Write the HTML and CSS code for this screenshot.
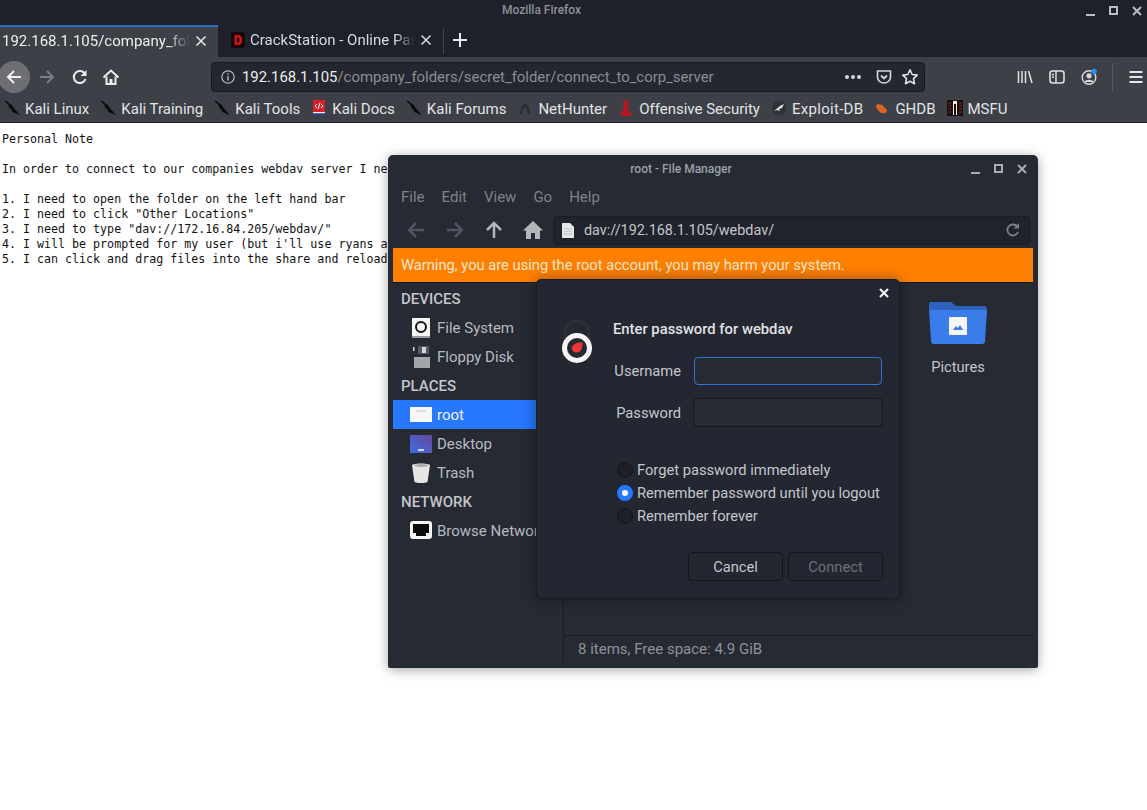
FILE: index.html
```html
<!DOCTYPE html>
<html>
<head>
    <title>Mozilla Firefox</title>
    <link rel="stylesheet" href="styles.css">
</head>
<body>
    <svg class="defs" width="0" height="0">
        <symbol id="kali" viewBox="0 0 16 16">
            <path d="M0 0.5 L2.5 1 L6 4 L8 5 L9.5 8 L12 10.5 L16 15 L12 13.5 L8.5 12 L7 9 L5 7.5 L4.5 5 Z" fill="#0b0b0d"/>
        </symbol>
    </svg>

    <div class="browser">
        <div class="titlebar">
            <span class="title">Mozilla Firefox</span>
            <div class="wm-buttons">
                <svg width="12" height="12" viewBox="0 0 12 12"><path d="M1 10h9" stroke="#b9bcc2" stroke-width="2"/></svg>
                <svg width="12" height="12" viewBox="0 0 12 12"><rect x="2" y="2" width="7" height="7" fill="none" stroke="#b9bcc2" stroke-width="2"/></svg>
                <svg width="12" height="12" viewBox="0 0 12 12"><path d="M2 2l8 8M10 2l-8 8" stroke="#b9bcc2" stroke-width="2"/></svg>
            </div>
        </div>

        <div class="tabstrip">
            <div class="tab active">
                <span class="tab-label">192.168.1.105/company_folders</span>
                <svg class="tab-close" width="12" height="12" viewBox="0 0 12 12"><path d="M1.5 1.5l9 9M10.5 1.5l-9 9" stroke="#e4e5e7" stroke-width="1.6"/></svg>
            </div>
            <div class="tab second">
                <svg class="favicon" width="16" height="16" viewBox="0 0 16 16"><rect x="1" y="0" width="14" height="16" rx="3" fill="#17070a"/><path d="M4.5 3h3.5c3 0 4 2 4 5s-1 5-4 5H4.5z" fill="#d3111b"/><path d="M7 5.5h1c1.2 0 1.5 1 1.5 2.5S9.2 10.5 8 10.5H7z" fill="#17070a"/></svg>
                <span class="tab-label">CrackStation - Online Password</span>
                <svg class="tab-close" width="12" height="12" viewBox="0 0 12 12"><path d="M1.5 1.5l9 9M10.5 1.5l-9 9" stroke="#d6d7da" stroke-width="1.6"/></svg>
            </div>
            <div class="tab-sep"></div>
            <svg class="new-tab" width="16" height="16" viewBox="0 0 16 16"><path d="M8 1v14M1 8h14" stroke="#e8e9eb" stroke-width="2"/></svg>
        </div>

        <div class="navbar">
            <div class="back">
                <svg width="18" height="18" viewBox="0 0 18 18"><path d="M16 9H3M9 3L3 9l6 6" fill="none" stroke="#f2f2f3" stroke-width="2"/></svg>
            </div>
            <svg class="nav-forward" width="18" height="18" viewBox="0 0 18 18"><path d="M2 9h13M9 3l6 6-6 6" fill="none" stroke="#7d7f85" stroke-width="1.8"/></svg>
            <svg class="nav-reload" width="18" height="18" viewBox="0 0 18 18"><path d="M14.5 11a6 6 0 1 1-.5-5" fill="none" stroke="#eceded" stroke-width="2"/><path d="M15.5 2v6h-6z" fill="#eceded"/></svg>
            <svg class="nav-home" width="18" height="18" viewBox="0 0 18 18"><path d="M1.5 9.5L9 2.5l7.5 7" fill="none" stroke="#eceded" stroke-width="2"/><path d="M4.5 8.5V16h9V8.5" fill="none" stroke="#eceded" stroke-width="2"/><rect x="7.5" y="11" width="3" height="5" fill="#eceded"/></svg>
            <div class="urlbar">
                <svg width="16" height="16" viewBox="0 0 16 16"><circle cx="8" cy="8" r="6.2" fill="none" stroke="#b4b6ba" stroke-width="1.2"/><path d="M8 7v4.5M8 4.3v1.4" stroke="#b4b6ba" stroke-width="1.4"/></svg>
                <span class="url"><b>192.168.1.105</b>/company_folders/secret_folder/connect_to_corp_server</span>
                <div class="url-dots"><i></i><i></i><i></i></div>
                <svg width="18" height="18" viewBox="0 0 18 18"><path d="M2.5 3h13v6a6.5 6 0 0 1-13 0z" fill="none" stroke="#d6d7d9" stroke-width="1.6" stroke-linejoin="round"/><path d="M6 7.5l3 3 3-3" fill="none" stroke="#d6d7d9" stroke-width="1.8"/></svg>
                <svg width="18" height="18" viewBox="0 0 18 18"><path d="M9 1.8l2.2 4.7 5 .6-3.7 3.5 1 5.1L9 13.2l-4.500 2.500 1-5.100L1.800 7.100l5-.6z" fill="none" stroke="#e2e3e5" stroke-width="1.6" stroke-linejoin="round"/></svg>
            </div>
            <div class="nav-tools">
                <svg width="18" height="18" viewBox="0 0 18 18"><path d="M2.5 3v12M6 3v12M9.5 3v12M12.5 3l3.5 12" stroke="#e0e1e3" stroke-width="1.5" fill="none"/></svg>
                <svg width="18" height="18" viewBox="0 0 18 18"><rect x="2" y="3" width="14" height="12" rx="2.5" fill="none" stroke="#e0e1e3" stroke-width="1.6"/><path d="M8 3v12M4 6.5h2M4 9h2" stroke="#e0e1e3" stroke-width="1.4"/></svg>
                <svg width="18" height="18" viewBox="0 0 18 18"><circle cx="9" cy="9.5" r="6.8" fill="none" stroke="#d8d9db" stroke-width="1.4"/><circle cx="9" cy="7.8" r="2.6" fill="#d8d9db"/><path d="M4.5 14c1-3 8-3 9 0z" fill="#d8d9db"/><circle cx="14" cy="3.5" r="2.8" fill="#2d8cf0"/></svg>
                <div class="tool-sep"></div>
                <svg width="18" height="18" viewBox="0 0 18 18"><path d="M2.5 4h13M2.5 9h13M2.5 14h13" stroke="#e6e7e9" stroke-width="2"/></svg>
            </div>
        </div>

        <div class="bookmarks">
            <div class="bookmark"><svg width="16" height="16"><use href="#kali"/></svg>Kali Linux</div>
            <div class="bookmark"><svg width="16" height="16"><use href="#kali"/></svg>Kali Training</div>
            <div class="bookmark"><svg width="16" height="16"><use href="#kali"/></svg>Kali Tools</div>
            <div class="bookmark"><svg width="16" height="16" viewBox="0 0 16 16"><rect x="2" y="0" width="12" height="12" fill="#d8202a"/><path d="M6 4L4 6l2 2M10 4l2 2-2 2M7 9l2-6" fill="none" stroke="#fff" stroke-width="1"/><rect x="2" y="12" width="12" height="1.5" fill="#eceded"/><rect x="2" y="13.5" width="12" height="2" fill="#2b3f8c"/></svg>Kali Docs</div>
            <div class="bookmark"><svg width="16" height="16"><use href="#kali"/></svg>Kali Forums</div>
            <div class="bookmark"><svg width="16" height="16" viewBox="0 0 16 16"><path d="M3 14C3.5 9 5 4 8 4s4.5 5 5 10h-2C10.5 10 9.5 7 8 7s-2.500 3-3 7z" fill="#2a2b30"/></svg>NetHunter</div>
            <div class="bookmark"><svg width="16" height="16" viewBox="0 0 16 16"><path d="M5.5 1.5a2.5 1.5 0 0 1 5 0V10l3 3v3h-11v-3l3-3z" fill="#b3171f"/></svg>Offensive Security</div>
            <div class="bookmark wide"><svg width="16" height="16" viewBox="0 0 16 16"><circle cx="8" cy="8" r="7" fill="#2f3137"/><path d="M3 11l6-5 4-2-2 4-3 1 1 2-3-1z" fill="#e1e2e4"/></svg>Exploit-DB</div>
            <div class="bookmark"><svg width="16" height="16" viewBox="0 0 16 16"><path d="M3 4l5 1 5 5-1 3H7l-3-3-2-3z" fill="#e2661f"/></svg>GHDB</div>
            <div class="bookmark"><svg width="16" height="16" viewBox="0 0 16 16"><rect width="16" height="16" fill="#1a0e10"/><path d="M6 1h4v14H9V4H7v11H6z" fill="#f0ece6"/><path d="M1 3h3M1 6h3M1 9h3M1 12h3M12 3h3M12 6h3M12 9h3M12 12h3" stroke="#7d3229"/></svg>MSFU</div>
        </div>

        <pre class="page">Personal Note

In order to connect to our companies webdav server I need to use the following steps

1. I need to open the folder on the left hand bar
2. I need to click "Other Locations"
3. I need to type "dav://172.16.84.205/webdav/"
4. I will be prompted for my user (but i'll use ryans account with the password I cracked)
5. I can click and drag files into the share and reload my browser</pre>
    </div>

    <div class="filemanager">
        <div class="fm-title">
            <span>root - File Manager</span>
            <div class="wm-buttons">
                <svg width="12" height="12" viewBox="0 0 12 12"><path d="M1 10h9" stroke="#a9acb2" stroke-width="2"/></svg>
                <svg width="12" height="12" viewBox="0 0 12 12"><rect x="2" y="2" width="7" height="7" fill="none" stroke="#a9acb2" stroke-width="2"/></svg>
                <svg width="12" height="12" viewBox="0 0 12 12"><path d="M2 2l8 8M10 2l-8 8" stroke="#a9acb2" stroke-width="2"/></svg>
            </div>
        </div>
        <div class="fm-menu">
            <span>File</span><span>Edit</span><span>View</span><span>Go</span><span>Help</span>
        </div>
        <div class="fm-toolbar">
            <svg width="20" height="20" viewBox="0 0 20 20"><path d="M18 10H4M10 3l-7 7 7 7" fill="none" stroke="#4f5563" stroke-width="2.5"/></svg>
            <svg width="20" height="20" viewBox="0 0 20 20"><path d="M2 10h14M10 3l7 7-7 7" fill="none" stroke="#4f5563" stroke-width="2.5"/></svg>
            <svg width="20" height="20" viewBox="0 0 20 20"><path d="M10 18V4M3 10l7-7 7 7" fill="none" stroke="#b4b6ba" stroke-width="2.5"/></svg>
            <svg width="20" height="20" viewBox="0 0 20 20"><path d="M10 1L0 10.5h3V19h5v-6h4v6h5v-8.5h3z" fill="#b4b6ba"/></svg>
            <div class="fm-path">
                <svg width="12" height="15" viewBox="0 0 12 15"><path d="M0 0h8l4 4v11H0z" fill="#e4e5e7"/><path d="M2 6h8M2 8.5h8M2 11h8" stroke="#c3c5c9"/></svg>
                <span class="fm-path-text">dav://192.168.1.105/webdav/</span>
                <svg width="16" height="16" viewBox="0 0 16 16"><path d="M13 10a5.5 5.5 0 1 1-.5-5" fill="none" stroke="#7d8087" stroke-width="1.8"/><path d="M14 1v5.5H8.500z" fill="#7d8087"/></svg>
            </div>
        </div>
        <div class="fm-warning">Warning, you are using the root account, you may harm your system.</div>
        <div class="fm-body">
            <div class="fm-sidebar">
                <div class="side-head">DEVICES</div>
                <div class="side-row">
                    <svg width="22" height="20" viewBox="0 0 22 20"><rect x="2" width="18" height="18" fill="#f6f6f6"/><circle cx="11" cy="9" r="5" fill="none" stroke="#15161a" stroke-width="2"/><rect x="2" y="18" width="18" height="2" fill="#9a9b9e"/></svg>
                    File System
                </div>
                <div class="side-row">
                    <svg width="22" height="22" viewBox="0 0 22 22"><rect x="8" y="0" width="11" height="8" fill="#55585f"/><rect x="12" y="1" width="4" height="6" fill="#d0d1d4"/><rect x="3" y="1" width="1.5" height="4" fill="#d0d1d4"/><rect x="4" y="11" width="16" height="11" fill="#a3a5a9"/></svg>
                    Floppy Disk
                </div>
                <div class="side-head">PLACES</div>
                <div class="side-row selected">
                    <svg width="22" height="15" viewBox="0 0 22 15"><rect width="22" height="15" fill="#f6f6f6"/><path d="M6 4h10" stroke="#c6c6c6"/></svg>
                    root
                </div>
                <div class="side-row">
                    <svg width="22" height="18" viewBox="0 0 22 18"><defs><linearGradient id="desk" x1="0" y1="1" x2="1" y2="0"><stop offset="0" stop-color="#3d6fe0"/><stop offset="1" stop-color="#66469a"/></linearGradient></defs><rect width="22" height="18" fill="url(#desk)"/><path d="M8 15h6" stroke="#fff" stroke-width="1.5"/></svg>
                    Desktop
                </div>
                <div class="side-row">
                    <svg width="22" height="20" viewBox="0 0 22 20"><path d="M2 2C5 0 17 0 20 2L17.5 19C15 20.5 7 20.5 4.5 19z" fill="#e6e6e6"/><ellipse cx="11" cy="2.5" rx="7" ry="1.5" fill="#a9aaac"/></svg>
                    Trash
                </div>
                <div class="side-head">NETWORK</div>
                <div class="side-row">
                    <svg width="22" height="19" viewBox="0 0 22 19"><rect width="22" height="18" rx="3" fill="#f6f6f6"/><path d="M3 3h16v9h-3v3H6v-3H3z" fill="#0c0c0e"/></svg>
                    Browse Network
                </div>
            </div>
            <div class="fm-content">
                <div class="fm-files">
                    <div class="file-item">
                        <svg width="58" height="42" viewBox="0 0 58 42"><path d="M2 0h20l5 4h28a3 3 0 0 1 3 3v3H0V2a2 2 0 0 1 2-2z" fill="#2f62bd"/><path d="M0 8h58l-2 31a3 3 0 0 1-3 3H5a3 3 0 0 1-3-3z" fill="#3a7dea"/><rect x="20" y="15" width="18" height="18" fill="#f4f6fa"/><path d="M24 28l3-4 2 2 2-3 3 5z" fill="#3a7dea"/></svg>
                        <span>Pictures</span>
                    </div>
                </div>
                <div class="fm-status">8 items, Free space: 4.9 GiB</div>
            </div>
        </div>

        <div class="dialog">
            <svg class="dialog-close" width="12" height="12" viewBox="0 0 12 12"><path d="M2 2l8 8M10 2l-8 8" stroke="#f0f0f1" stroke-width="2.2"/></svg>
            <div class="dialog-main">
                <svg class="lock" width="30" height="44" viewBox="0 0 30 44"><path d="M3 18V12a12 11 0 0 1 24 0v6" fill="none" stroke="#2c2f38" stroke-width="3"/><circle cx="15" cy="28" r="12.5" fill="#262932" stroke="#f6f6f6" stroke-width="5"/><path d="M20.5 22.5c0 6-1.5 10-6 10-3 0-4.700-1.800-4.700-4.500 0-3.500 4.700-5.500 10.700-5.500z" fill="#ee363a"/></svg>
                <div class="dialog-fields">
                    <div class="dialog-title">Enter password for webdav</div>
                    <div class="field-row">
                        <label class="field-label">Username</label>
                        <div class="field focused"></div>
                    </div>
                    <div class="field-row">
                        <label class="field-label">Password</label>
                        <div class="field"></div>
                    </div>
                    <div class="radios">
                        <div class="radio-row"><i class="radio"></i>Forget password immediately</div>
                        <div class="radio-row"><i class="radio checked"></i>Remember password until you logout</div>
                        <div class="radio-row"><i class="radio"></i>Remember forever</div>
                    </div>
                </div>
            </div>
            <div class="dialog-buttons">
                <div class="btn">Cancel</div>
                <div class="btn disabled">Connect</div>
            </div>
        </div>
    </div>
</body>
</html>
```

FILE: styles.css
```css
* {
    box-sizing: border-box;
}

html, body {
    margin: 0;
    padding: 0;
    height: 100%;
    overflow: hidden;
}

body {
    font-family: Roboto, sans-serif;
    background-color: #fff;
    position: relative;
}

.defs {
    position: absolute;
}

.browser {
    display: flex;
    flex-direction: column;
    height: 810px;
}

.titlebar {
    height: 25px;
    padding-right: 64px;
    background-color: #1e2129;
    position: relative;
    display: flex;
    justify-content: center;
    align-items: center;
    flex-shrink: 0;
}

.title {
    font-size: 12px;
    font-weight: 500;
    color: #8d9096;
    margin-top: -6px;
}

.wm-buttons {
    position: absolute;
    right: 4px;
    top: 5px;
    display: flex;
    gap: 11px;
}

.tabstrip {
    height: 32px;
    background-color: #1e2129;
    display: flex;
    align-items: center;
    flex-shrink: 0;
}

.tab {
    height: 32px;
    display: flex;
    align-items: center;
    font-size: 15px;
    padding-bottom: 2px;
}

.tab.active {
    width: 218px;
    padding: 0 11px 3px 2px;
    background-color: #3d4047;
    border-top: 2px solid #2f6fc4;
    color: #eceded;
}

.tab.second {
    width: 225px;
    padding-left: 12px;
    padding-right: 11px;
    color: #d8d9db;
}

.tab-label {
    flex: 1;
    min-width: 0;
    overflow: hidden;
    white-space: nowrap;
    -webkit-mask-image: linear-gradient(to right, #000 88%, transparent 100%);
    mask-image: linear-gradient(to right, #000 88%, transparent 100%);
}

.favicon {
    margin-right: 4px;
    flex-shrink: 0;
}

.tab-close {
    flex-shrink: 0;
    margin-left: 5px;
}

.tab-sep {
    width: 1px;
    height: 26px;
    background-color: #43464d;
}

.new-tab {
    margin-left: 8px;
    margin-top: -2px;
}

.navbar {
    height: 36px;
    padding-top: 3px;
    background-color: #3d4047;
    display: flex;
    align-items: center;
    flex-shrink: 0;
}

.back {
    width: 32px;
    height: 32px;
    margin-left: -2px;
    border-radius: 50%;
    background-color: #6d6f75;
    display: flex;
    align-items: center;
    justify-content: center;
    flex-shrink: 0;
}

.nav-forward {
    margin-left: 8px;
    flex-shrink: 0;
}

.nav-reload {
    margin-left: 15px;
    flex-shrink: 0;
}

.nav-home {
    margin-left: 13px;
    flex-shrink: 0;
}

.urlbar {
    width: 714px;
    height: 30px;
    margin-left: 91px;
    background-color: #24272f;
    border: 1px solid #17191f;
    border-radius: 4px;
    display: flex;
    align-items: center;
    gap: 8px;
    padding: 0 5px 0 8px;
    flex-shrink: 0;
}

.url {
    flex: 1;
    font-size: 14.9px;
    color: #8b8d92;
    white-space: nowrap;
    margin-left: -2px;
}

.url b {
    font-weight: 400;
    color: #eceded;
}

.url-dots {
    display: flex;
    gap: 2px;
    margin-right: 6px;
}

.url-dots i {
    display: block;
    width: 4px;
    height: 4px;
    border-radius: 50%;
    background-color: #d6d7d9;
}

.nav-tools {
    display: flex;
    align-items: center;
    margin-left: 91px;
    gap: 14px;
    flex-shrink: 0;
}

.tool-sep {
    width: 1px;
    height: 28px;
    background-color: #55585e;
}

.bookmarks {
    height: 30px;
    padding-top: 2px;
    background-color: #3d4047;
    border-bottom: 1px solid #1a1c22;
    display: flex;
    align-items: center;
    padding-left: 4px;
    gap: 11px;
    flex-shrink: 0;
}

.bookmark {
    display: flex;
    align-items: center;
    gap: 5px;
    font-size: 15px;
    color: #e3e4e6;
    white-space: nowrap;
}

.bookmark.wide {
    letter-spacing: 0.3px;
}

.bookmark svg {
    margin-top: -2px;
}

.page {
    flex: 1;
    margin: 0;
    padding: 9px 2px;
    background-color: #fff;
    font-family: "DejaVu Sans Mono", monospace;
    font-size: 11.65px;
    line-height: 15px;
    color: #111;
    white-space: pre;
    overflow: hidden;
}

/* file manager window */
.filemanager {
    position: absolute;
    left: 388px;
    top: 155px;
    width: 650px;
    height: 513px;
    background-color: #262a33;
    border-radius: 5px 5px 2px 2px;
    padding: 0 5px 5px;
    display: flex;
    flex-direction: column;
    box-shadow: 0 2px 12px rgba(0, 0, 0, 0.35);
    color: #c4c6ca;
}

.fm-title {
    height: 27px;
    padding-right: 64px;
    position: relative;
    display: flex;
    justify-content: center;
    align-items: center;
    font-size: 12px;
    font-weight: 500;
    color: #9da0a6;
    flex-shrink: 0;
}

.fm-title .wm-buttons {
    top: 8px;
    right: 5px;
}

.fm-menu {
    height: 30px;
    display: flex;
    align-items: center;
    gap: 17px;
    padding-left: 8px;
    font-size: 15px;
    color: #7e8289;
    flex-shrink: 0;
}

.fm-toolbar {
    height: 36px;
    display: flex;
    align-items: center;
    gap: 19px;
    padding-left: 13px;
    flex-shrink: 0;
}

.fm-path {
    flex: 1;
    height: 29px;
    margin-left: -9px;
    background-color: #20232b;
    border: 1px solid #1b1d24;
    border-radius: 4px;
    display: flex;
    align-items: center;
    padding: 0 8px;
    gap: 10px;
    margin-right: 3px;
}

.fm-path-text {
    flex: 1;
    font-size: 14.4px;
    color: #c4c6ca;
}

.fm-warning {
    height: 35px;
    flex-shrink: 0;
    background-color: #ff8000;
    color: #f7e6cf;
    font-size: 14.7px;
    display: flex;
    align-items: center;
    padding-left: 8px;
    border-bottom: 1px solid #17191f;
}

.fm-body {
    flex: 1;
    display: flex;
    min-height: 0;
}

.fm-sidebar {
    width: 171px;
    padding-top: 1px;
    flex-shrink: 0;
    overflow: hidden;
    border-right: 1px solid #1b1d24;
}

.side-head {
    height: 29px;
    display: flex;
    align-items: center;
    padding-left: 8px;
    font-size: 15px;
    font-weight: 500;
    color: #c4c6ca;
}

.side-row {
    height: 29px;
    display: flex;
    align-items: center;
    gap: 5px;
    padding-left: 17px;
    font-size: 15px;
    color: #b8bac0;
    white-space: nowrap;
}

.side-row svg {
    flex-shrink: 0;
}

.side-row.selected {
    background-color: #2777ff;
    color: #eef1f7;
}

.fm-content {
    flex: 1;
    display: flex;
    flex-direction: column;
    min-width: 0;
}

.fm-files {
    flex: 1;
    display: flex;
    justify-content: flex-end;
    padding: 19px 36px 0 0;
}

.file-item {
    width: 78px;
    display: flex;
    flex-direction: column;
    align-items: center;
    gap: 14px;
    font-size: 14.7px;
    color: #c4c6ca;
    height: 80px;
}

.fm-status {
    height: 28px;
    flex-shrink: 0;
    border-top: 1px solid #1b1d24;
    display: flex;
    align-items: center;
    padding-left: 14px;
    padding-bottom: 2px;
    font-size: 15px;
    color: #8f9298;
}

/* password dialog */
.dialog {
    position: absolute;
    left: 148px;
    top: 124px;
    width: 364px;
    height: 320px;
    background-color: #232731;
    border: 1px solid #1a1c22;
    border-radius: 5px;
    box-shadow: 0 0 14px rgba(0, 0, 0, 0.4);
    display: flex;
    flex-direction: column;
}

.dialog-close {
    position: absolute;
    top: 7px;
    right: 9px;
}

.dialog-main {
    flex: 1;
    display: flex;
    padding: 37px 16px 0 25px;
}

.lock {
    flex-shrink: 0;
    margin-top: 3px;
}

.dialog-fields {
    flex: 1;
    margin-left: 21px;
    min-width: 0;
}

.dialog-title {
    font-size: 14.8px;
    font-weight: 500;
    color: #e0e1e4;
    height: 24px;
    display: flex;
    align-items: center;
}

.field-row {
    display: flex;
    align-items: center;
    justify-content: flex-end;
    margin-top: 15px;
    height: 29px;
}

.field-row + .field-row {
    margin-top: 13px;
}

.field-label {
    font-size: 14.7px;
    color: #c4c6ca;
    margin-right: 12px;
}

.field {
    width: 190px;
    height: 29px;
    background-color: #262a33;
    border: 1px solid #15171c;
    border-radius: 4px;
}

.field.focused {
    width: 188px;
    height: 28px;
    margin: 0 1px;
    border-color: #2f72dc;
}

.radios {
    margin-top: 31px;
    margin-left: 4px;
}

.radio-row {
    height: 23px;
    display: flex;
    align-items: center;
    gap: 4px;
    font-size: 14.7px;
    color: #c4c6ca;
    white-space: nowrap;
}

.radio {
    display: block;
    width: 16px;
    height: 16px;
    border-radius: 50%;
    background-color: #1d2027;
    border: 1px solid #15171c;
    flex-shrink: 0;
}

.radio.checked {
    background-color: #fff;
    border: 5px solid #2777ff;
}

.dialog-buttons {
    display: flex;
    justify-content: flex-end;
    gap: 5px;
    padding: 0 16px 17px;
}

.btn {
    width: 95px;
    height: 29px;
    background-color: #232731;
    border: 1px solid #15171c;
    border-radius: 4px;
    display: flex;
    align-items: center;
    justify-content: center;
    font-size: 14.7px;
    color: #c4c6ca;
}

.btn.disabled {
    color: #6d7077;
}
```
